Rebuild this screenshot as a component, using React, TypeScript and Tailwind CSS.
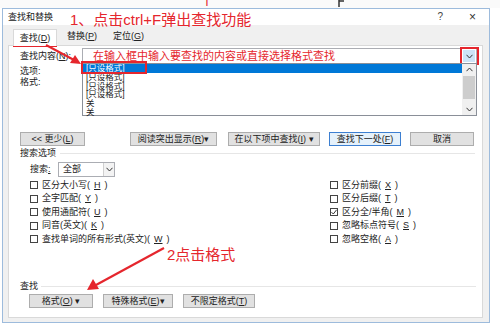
import type { ReactNode } from "react";
import clsx from "clsx";

const K = ({ c }: { c: string }) => (
  <>
    (<u>{c}</u>)
  </>
);

function Chevron({ up = false, className = "" }: { up?: boolean; className?: string }) {
  return (
    <svg width="7" height="5" viewBox="0 0 7 5" className={className}>
      <path
        d={up ? "M0.5 4.2 L3.5 1 L6.5 4.2" : "M0.5 0.8 L3.5 4 L6.5 0.8"}
        fill="none"
        stroke="#333"
        strokeWidth="1"
      />
    </svg>
  );
}

function Btn({
  children,
  className = "",
  focused = false,
}: {
  children: ReactNode;
  className?: string;
  focused?: boolean;
}) {
  return (
    <div
      className={clsx(
        "flex h-[14px] shrink-0 items-center justify-center border text-[9px] leading-none text-[#222]",
        focused ? "border-[#3c7fd1] bg-[#e5f1fb]" : "border-[#adadad] bg-[#e1e1e1]",
        className,
      )}
    >
      {children}
    </div>
  );
}

function Check({ label, checked = false }: { label: ReactNode; checked?: boolean }) {
  return (
    <div className="flex h-[13.5px] items-center gap-[4px] text-[9px] leading-none text-[#222]">
      <span className="flex size-[8px] items-center justify-center border border-[#444] bg-white">
        {checked && (
          <svg width="6" height="6" viewBox="0 0 6 6">
            <path d="M0.5 3.2 L2.3 5 L5.6 0.8" fill="none" stroke="#222" strokeWidth="0.9" />
          </svg>
        )}
      </span>
      {label}
    </div>
  );
}

export default function App() {
  return (
    <div className="relative h-[326px] w-[500px] overflow-hidden bg-white font-['Liberation_Sans','Noto_Sans_CJK_SC',sans-serif] text-[#222]">
      {/* page strip above the dialog */}
      <div className="h-[8px] bg-[#fafafa]" />

      {/* dialog window */}
      <div className="ml-[2px] flex h-[315px] w-[488px] flex-col border border-[#9dbbdc] bg-[#f0f0f0]">
        {/* title bar */}
        <div className="flex h-[16px] items-center justify-between bg-white pl-[5px] pr-[13px] text-[9px] leading-none">
          <span>查找和替换</span>
          <div className="flex items-center">
            <span className="text-[10px] text-[#444]">?</span>
            <span className="ml-[26px] text-[12px] font-light text-[#333]">×</span>
          </div>
        </div>

        {/* tabs */}
        <div className="flex h-[20px] items-end pl-[10px] text-[9px] leading-none">
          <div className="relative z-10 -mb-px flex h-[17px] w-[44px] items-center justify-center border border-b-0 border-[#d9d9d9] bg-white">
            查找<K c="D" />
          </div>
          <div className="ml-[10px] flex h-[17px] items-center">
            替换<K c="P" />
          </div>
          <div className="ml-[16px] flex h-[17px] items-center">
            定位<K c="G" />
          </div>
        </div>

        {/* tab panel */}
        <div className="mb-[4px] ml-[5px] mr-[6px] flex flex-1 flex-col border border-[#d9d9d9] bg-white">
          {/* find what */}
          <div className="mt-[2px] flex h-[16px] items-center pl-[11px] text-[9px] leading-none">
            <span className="w-[62px]">
              查找内容<K c="N" />:
            </span>
            <div className="relative h-[16px] w-[395px]">
              <div className="flex h-full items-center border border-[#abadb3] bg-white pl-[10px] text-[11px] leading-none text-[#e5262d]">
                在输入框中输入要查找的内容或直接选择格式查找
                <div className="ml-auto mr-[1px] flex h-[12px] w-[12px] items-center justify-center bg-[#cde4f7]">
                  <Chevron />
                </div>
              </div>
              {/* open dropdown list */}
              <div className="absolute left-0 top-[15px] z-10 h-[53px] w-[395px] border border-[#8a8f98] bg-white text-[8.5px] leading-[8.8px]">
                <div className="w-[379px] bg-[#0078d7] pl-[3px] text-white">[只设格式]</div>
                <div className="pl-[3px]">[只设格式]</div>
                <div className="pl-[3px]">[只设格式]</div>
                <div className="pl-[3px]">[只设格式]</div>
                <div className="pl-[3px]">关</div>
                <div className="pl-[3px]">关</div>
                <div className="absolute right-0 top-0 flex h-full w-[14px] flex-col items-center bg-[#f0f0f0]">
                  <Chevron up className="mt-[3px]" />
                  <div className="mt-[4px] h-[23px] w-[12px] bg-[#cdcdcd]" />
                  <Chevron className="mt-auto mb-[3px]" />
                </div>
              </div>
            </div>
          </div>

          <div className="mt-[2px] flex h-[11px] items-center pl-[11px] text-[9px] leading-none">选项:</div>
          <div className="flex h-[11px] items-center pl-[11px] text-[9px] leading-none">格式:</div>

          {/* main buttons */}
          <div className="mt-[44px] flex pl-[11px]">
            <Btn className="w-[65px]">
              {"<<"} 更少<K c="L" />
            </Btn>
            <Btn className="ml-[45px] w-[87px]">
              阅读突出显示<K c="R" />▾
            </Btn>
            <Btn className="ml-[11px] w-[92px]">
              在以下项中查找<K c="I" /> ▾
            </Btn>
            <Btn focused className="ml-[9px] w-[72px]">
              查找下一处<K c="F" />
            </Btn>
            <Btn className="ml-[9px] w-[64px]">取消</Btn>
          </div>

          {/* search options */}
          <div className="mt-[2px] flex h-[10px] items-center pl-[11px] pr-[7px] text-[9px] leading-none">
            <span>搜索选项</span>
            <div className="ml-[4px] h-px flex-1 bg-[#e6e6e6]" />
          </div>

          <div className="mt-[4px] flex h-[15px] items-center pl-[21px] text-[9px] leading-none">
            <span className="w-[28px]">
              搜索<u>:</u>
            </span>
            <div className="flex h-[15px] w-[57px] items-center border border-[#abadb3] bg-white">
              <span className="pl-[4px]">全部</span>
              <div className="ml-auto flex h-full w-[11px] items-center justify-center border-l border-[#d0d0d0] bg-[#f3f3f3]">
                <Chevron />
              </div>
            </div>
          </div>

          <div className="mt-[1.5px] flex pl-[21px]">
            <div className="flex w-[300px] flex-col">
              <Check label={<>区分大小写<K c="H" /></>} />
              <Check label={<>全字匹配<K c="Y" /></>} />
              <Check label={<>使用通配符<K c="U" /></>} />
              <Check label={<>同音(英文)<K c="K" /></>} />
              <Check label={<>查找单词的所有形式(英文)<K c="W" /></>} />
            </div>
            <div className="flex flex-col">
              <Check label={<>区分前缀<K c="X" /></>} />
              <Check label={<>区分后缀<K c="T" /></>} />
              <Check checked label={<>区分全/半角<K c="M" /></>} />
              <Check label={<>忽略标点符号<K c="S" /></>} />
              <Check label={<>忽略空格<K c="A" /></>} />
            </div>
          </div>

          {/* find group */}
          <div className="mt-[35px] flex h-[10px] items-center pl-[11px] pr-[6px] text-[9px] leading-none">
            <span>查找</span>
            <div className="ml-[3px] h-px flex-1 bg-[#e6e6e6]" />
          </div>
          <div className="mt-[3px] flex pl-[20px]">
            <Btn className="w-[64px]">
              格式<K c="O" /> ▾
            </Btn>
            <Btn className="ml-[10px] w-[70px]">
              特殊格式<K c="E" />▾
            </Btn>
            <Btn className="ml-[10px] w-[72px]">
              不限定格式<K c="T" />
            </Btn>
          </div>
        </div>
      </div>

      {/* annotations layered over the screenshot */}
      <span className="absolute left-[200px] top-[-8px] text-[14px] leading-none text-[#e5262d]">千</span>
      <svg className="absolute left-[338px] top-0" width="8" height="8" viewBox="0 0 8 8">
        <path d="M1 0 L1 7 M1 1 L6 1" stroke="#333" strokeWidth="1.5" fill="none" />
      </svg>

      <div className="absolute left-[70px] top-[12px] text-[15px] leading-[16px] text-[#e5262d]">
        1、点击ctrl+F弹出查找功能
      </div>
      <div className="absolute left-[13px] top-[29px] h-[18px] w-[44px] border-2 border-[#e5262d]" />
      <div className="absolute left-[81px] top-[61px] z-20 h-[13px] w-[66px] border-2 border-[#e5262d]" />
      <div className="absolute left-[460px] top-[47px] h-[18px] w-[19px] border-2 border-[#e5262d]" />

      <div className="absolute left-[167px] top-[247px] text-[15px] leading-[16px] text-[#e5262d]">2点击格式</div>

      <svg className="pointer-events-none absolute left-0 top-0 z-30" width="500" height="326" viewBox="0 0 500 326">
        <line x1="46" y1="45" x2="74" y2="60" stroke="#e5262d" strokeWidth="2" />
        <path d="M81 64 L70 63 L75 55 Z" fill="#e5262d" />
        <line x1="164" y1="248" x2="96" y2="285" stroke="#e5262d" strokeWidth="2.2" />
        <path d="M87 290 L93 279 L99 289 Z" fill="#e5262d" />
      </svg>
    </div>
  );
}
